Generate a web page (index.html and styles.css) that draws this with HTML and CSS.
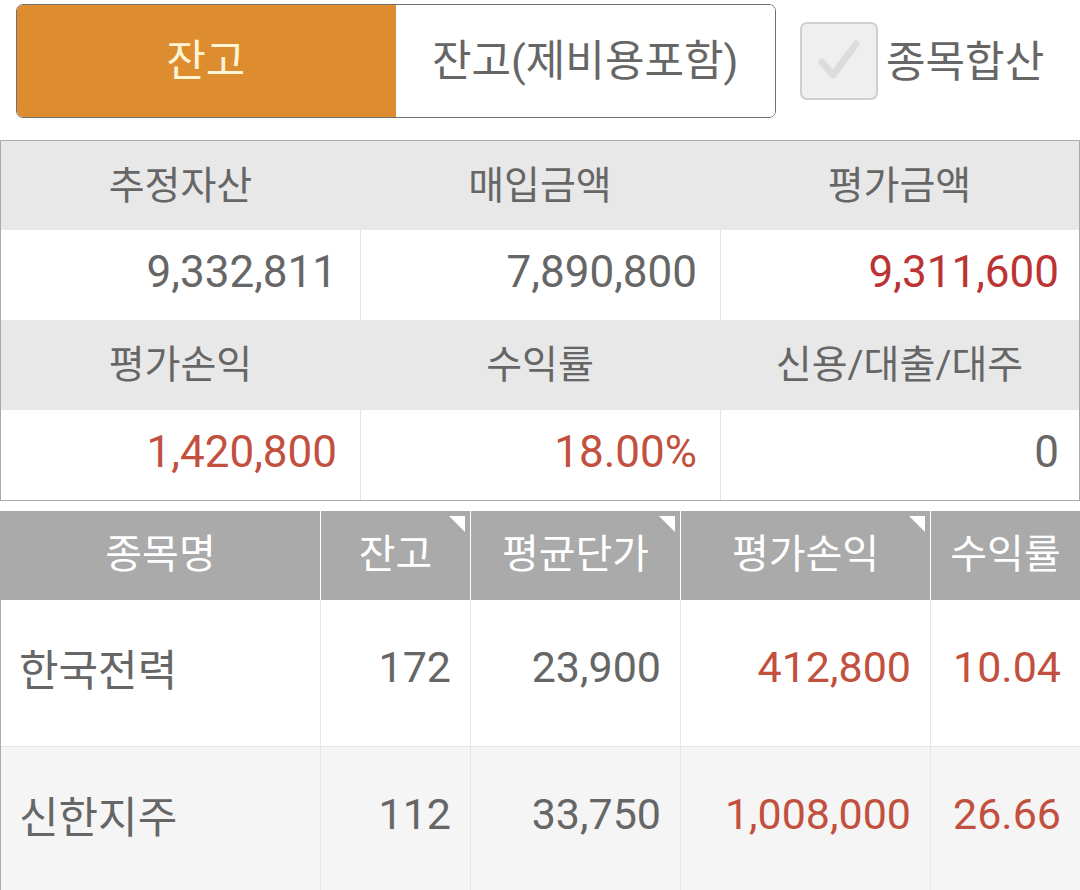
FILE: index.html
```html
<!DOCTYPE html>
<html lang="ko">
<head>
<meta charset="utf-8">
<link rel="stylesheet" href="styles.css">
</head>
<body>
<div class="topbar">
  <div class="tabs">
    <div class="tab active">잔고</div>
    <div class="tab">잔고(제비용포함)</div>
  </div>
  <div class="check">
    <span class="box">
      <svg width="78" height="78" viewBox="0 0 78 78"><path d="M22 40 L33 53 L56 22" fill="none" stroke="#dcdcdc" stroke-width="7" stroke-linecap="round" stroke-linejoin="round"/></svg>
    </span>
    <span class="check-label">종목합산</span>
  </div>
</div>

<div class="summary">
  <div class="sh">추정자산</div><div class="sh">매입금액</div><div class="sh">평가금액</div>
  <div class="sv">9,332,811</div><div class="sv">7,890,800</div><div class="sv red last">9,311,600</div>
  <div class="sh">평가손익</div><div class="sh">수익률</div><div class="sh">신용/대출/대주</div>
  <div class="sv red2">1,420,800</div><div class="sv red2">18.00%</div><div class="sv last">0</div>
</div>

<div class="stocks">
  <div class="th">종목명</div>
  <div class="th sort">잔고</div>
  <div class="th sort">평균단가</div>
  <div class="th sort">평가손익</div>
  <div class="th">수익률</div>

  <div class="td name">한국전력</div>
  <div class="td">172</div>
  <div class="td">23,900</div>
  <div class="td red2">412,800</div>
  <div class="td red2">10.04</div>

  <div class="td name alt">신한지주</div>
  <div class="td alt">112</div>
  <div class="td alt">33,750</div>
  <div class="td alt red2">1,008,000</div>
  <div class="td alt red2">26.66</div>
</div>
</body>
</html>
```
FILE: styles.css
```css
html, body {
  margin: 0;
  padding: 0;
  background: #ffffff;
}
body {
  font-family: Roboto, "Noto Sans CJK KR", sans-serif;
  color: #666666;
  width: 1080px;
  height: 890px;
  overflow: hidden;
}
.topbar {
  display: flex;
  align-items: center;
  padding: 4px 0 0 16px;
  height: 114px;
}
.tabs {
  display: flex;
  width: 760px;
  height: 114px;
  box-sizing: border-box;
  border: 1px solid #707070;
  border-radius: 7px;
  overflow: hidden;
}
.tab {
  flex: 1;
  display: flex;
  align-items: center;
  justify-content: center;
  font-size: 43px;
  color: #666666;
  background: #ffffff;
  padding-bottom: 8px;
}
.tab.active {
  background: #dd8c30;
  color: #fdf4d6;
  margin: -1px 0 -1px -1px;
}
.check {
  display: flex;
  align-items: center;
  margin-left: 24px;
  gap: 8px;
}
.box {
  width: 78px;
  height: 78px;
  box-sizing: border-box;
  border: 2px solid #cfcfcf;
  border-radius: 7px;
  background: #efefef;
  display: flex;
  align-items: center;
  justify-content: center;
  overflow: hidden;
}
.box svg {
  display: block;
  flex: none;
}
.check-label {
  font-size: 43px;
  color: #666666;
  padding-bottom: 6px;
}
.summary {
  margin-top: 22px;
  display: grid;
  grid-template-columns: 359px 360px 1fr;
  grid-auto-rows: 89px 90px 90px 90px;
  border: 1px solid #aaaaaa;
  width: 1080px;
  box-sizing: border-box;
}
.sh {
  background: #e8e8e8;
  display: flex;
  align-items: center;
  justify-content: center;
  font-size: 39px;
  color: #666666;
  padding-bottom: 8px;
}
.sv {
  display: flex;
  align-items: center;
  justify-content: flex-end;
  padding-right: 23px;
  font-size: 44px;
  color: #666666;
  border-left: 1px solid #e4e4e4;
  background: #ffffff;
  padding-bottom: 6px;
}
.sv.last {
  padding-right: 20px;
}
.sv:nth-child(3n+1) {
  border-left: none;
}
.stocks {
  margin-top: 10px;
  display: grid;
  grid-template-columns: 319px 150px 210px 250px 1fr;
  grid-template-rows: 89px 146px 146px;
  border-left: 1px solid #aaaaaa;
  width: 1080px;
  box-sizing: border-box;
}
.th {
  position: relative;
  background: #aaaaaa;
  color: #ffffff;
  font-size: 40px;
  display: flex;
  align-items: center;
  justify-content: center;
  border-left: 1px solid #ffffff;
  padding-bottom: 9px;
}
.th:first-child {
  border-left: none;
}
.th.sort::after {
  content: "";
  position: absolute;
  top: 5px;
  right: 5px;
  width: 0;
  height: 0;
  border-top: 16px solid #ffffff;
  border-left: 16px solid transparent;
}
.td {
  display: flex;
  align-items: center;
  justify-content: flex-end;
  padding-right: 19px;
  font-size: 43px;
  color: #666666;
  background: #ffffff;
  border-left: 1px solid #e6e6e6;
  padding-bottom: 12px;
}
.td.name {
  justify-content: flex-start;
  padding-left: 18px;
  border-left: none;
}
.td.alt {
  background: #f5f5f5;
  border-top: 1px solid #e6e6e6;
}
.sv.red { color: #bb3333; }
.sv.red2, .td.red2 { color: #c2503f; }
```
